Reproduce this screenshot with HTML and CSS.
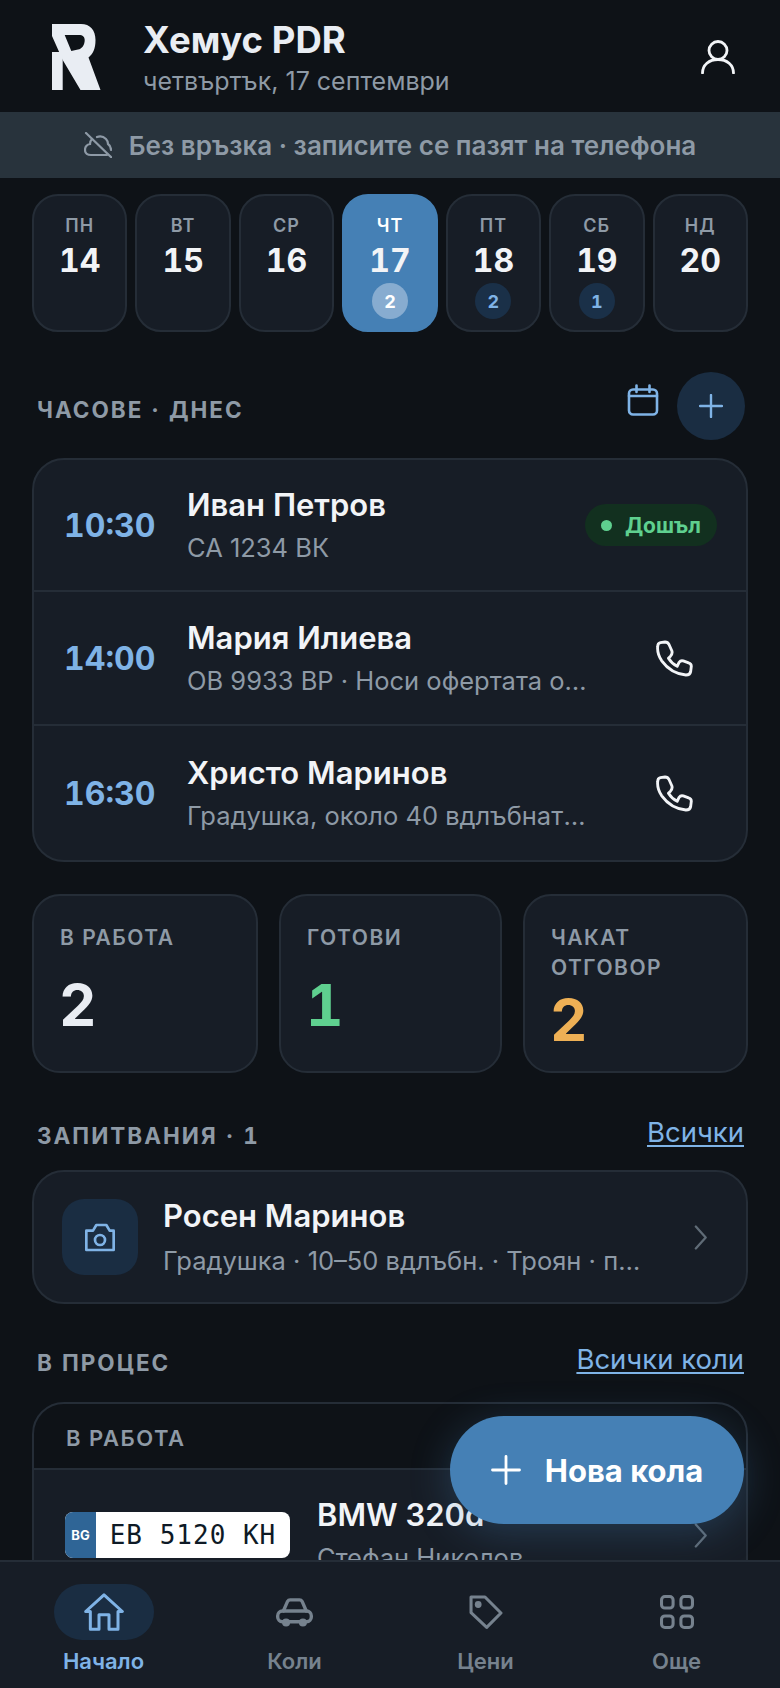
FILE: index.html
```html
<!DOCTYPE html>
<html lang="bg">
<head>
<meta charset="utf-8">
<title>Хемус PDR</title>
<link rel="stylesheet" href="styles.css">
</head>
<body>
<div class="app">
  <div class="scroll">
    <header class="top">
      <svg class="logo" viewBox="0 0 49 66"><path fill="#e9edf3" fill-rule="evenodd" d="M0 0H29C38 0 43.500 6 43.500 16C43.500 25 41 30 36.500 33.500L48.500 66H28.500L10.700 36L0 12ZM12.700 11H26.700C31 11 32.700 13 32.700 16C32.700 21 30 25 26 25.500L19.300 27Z"/><path fill="#e9edf3" d="M0 28H9L10.700 31V66H0Z"/></svg>
      <div class="top-text">
        <div class="brand">Хемус PDR</div>
        <div class="date">четвъртък, 17 септември</div>
      </div>
      <svg class="user" viewBox="0 0 34 34" fill="none" stroke="#f2f4f7" stroke-width="2.800" stroke-linecap="round"><circle cx="17" cy="10.500" r="9"/><path d="M1.500 33C1.500 25 8 19.500 17 19.500S32.500 25 32.500 33"/></svg>
    </header>
    <div class="banner">
      <svg class="off" viewBox="0 0 28 26" fill="none" stroke="#8e9aa6" stroke-width="2.200" stroke-linecap="round"><path d="M2 1L28 26"/><path d="M8 7Q6 9 6 12Q1 13 1 18Q1 23 7 23H23"/><path d="M13 5Q18 3 22 7Q24 9 24 12Q27 14 27 18"/></svg>
      <span>Без връзка · записите се пазят на телефона</span>
    </div>
    <div class="days">
      <div class="day"><span class="dow">ПН</span><span class="num">14</span></div>
      <div class="day"><span class="dow">ВТ</span><span class="num">15</span></div>
      <div class="day"><span class="dow">СР</span><span class="num">16</span></div>
      <div class="day active"><span class="dow">ЧТ</span><span class="num">17</span><span class="cnt">2</span></div>
      <div class="day"><span class="dow">ПТ</span><span class="num">18</span><span class="cnt">2</span></div>
      <div class="day"><span class="dow">СБ</span><span class="num">19</span><span class="cnt">1</span></div>
      <div class="day"><span class="dow">НД</span><span class="num">20</span></div>
    </div>
    <div class="sec sec-hours">
      <span class="sec-title">ЧАСОВЕ · ДНЕС</span>
      <div class="sec-actions">
        <svg class="cal" viewBox="0 0 32 32" fill="none" stroke="#7fb3e6" stroke-width="2.600" stroke-linecap="round" stroke-linejoin="round"><rect x="2" y="5.500" width="28" height="25" rx="4"/><path d="M2 12H30M9.500 1.500V8M22.500 1.500V8"/></svg>
        <button class="round-add"><svg viewBox="0 0 24 24" fill="none" stroke="#7fb3e6" stroke-width="2.400" stroke-linecap="round"><path d="M12 1V23M1 12H23"/></svg></button>
      </div>
    </div>
    <div class="card">
      <div class="appt">
        <span class="time">10:30</span>
        <div class="info"><div class="name">Иван Петров</div><div class="sub">СА 1234 ВК</div></div>
        <span class="chip"><i class="dot"></i>Дошъл</span>
      </div>
      <div class="appt">
        <span class="time">14:00</span>
        <div class="info"><div class="name">Мария Илиева</div><div class="sub">ОВ 9933 ВР · Носи офертата от застрахователя</div></div>
        <svg class="phone" viewBox="15 30 110 110" fill="none" stroke="#f2f4f7" stroke-width="8.500" stroke-linecap="round" stroke-linejoin="round"><path d="M28 38L42 36Q50 36 54 44L62 62Q65 70 58 78L52 84Q62 100 78 108L84 96Q88 90 96 92L112 98Q120 100 120 108L118 124Q116 134 104 134Q60 130 32 92Q18 70 20 50Q20 40 28 38Z"/></svg>
      </div>
      <div class="appt">
        <span class="time">16:30</span>
        <div class="info"><div class="name">Христо Маринов</div><div class="sub">Градушка, около 40 вдлъбнатини по покрива</div></div>
        <svg class="phone" viewBox="15 30 110 110" fill="none" stroke="#f2f4f7" stroke-width="8.500" stroke-linecap="round" stroke-linejoin="round"><path d="M28 38L42 36Q50 36 54 44L62 62Q65 70 58 78L52 84Q62 100 78 108L84 96Q88 90 96 92L112 98Q120 100 120 108L118 124Q116 134 104 134Q60 130 32 92Q18 70 20 50Q20 40 28 38Z"/></svg>
      </div>
    </div>
    <div class="stats">
      <div class="stat"><div class="stat-label">В РАБОТА</div><div class="stat-num">2</div></div>
      <div class="stat"><div class="stat-label">ГОТОВИ</div><div class="stat-num green">1</div></div>
      <div class="stat"><div class="stat-label">ЧАКАТ ОТГОВОР</div><div class="stat-num orange">2</div></div>
    </div>
    <div class="sec sec-inq">
      <span class="sec-title">ЗАПИТВАНИЯ · 1</span>
      <a class="more">Всички</a>
    </div>
    <div class="card inq">
      <div class="inq-ic"><svg viewBox="0 0 90 85" fill="none" stroke="#7fb3e6" stroke-width="8" stroke-linejoin="round"><path d="M4 22H24L34 5H64L74 22H86V80H4Z"/><circle cx="45" cy="50" r="15"/></svg></div>
      <div class="info"><div class="name">Росен Маринов</div><div class="sub">Градушка · 10–50 вдлъбн. · Троян · преди 2 часа</div></div>
      <svg class="chev" viewBox="0 0 12 24" fill="none" stroke="#5f6b76" stroke-width="2.200" stroke-linecap="round" stroke-linejoin="round"><path d="M1.500 1.500L11 12L1.500 22.500"/></svg>
    </div>
    <div class="sec sec-proc">
      <span class="sec-title">В ПРОЦЕС</span>
      <a class="more">Всички коли</a>
    </div>
    <div class="card proc">
      <div class="proc-head">В РАБОТА</div>
      <div class="car">
        <div class="plate"><span class="bg">BG</span><span class="reg">ЕВ 5120 КН</span></div>
        <div class="info"><div class="name">BMW 320d</div><div class="sub">Стефан Николов</div></div>
        <svg class="chev" viewBox="0 0 12 24" fill="none" stroke="#5f6b76" stroke-width="2.200" stroke-linecap="round" stroke-linejoin="round"><path d="M1.500 1.500L11 12L1.500 22.500"/></svg>
      </div>
    </div>
  </div>
  <button class="fab"><svg viewBox="0 0 30 30" fill="none" stroke="#fff" stroke-width="2.800" stroke-linecap="round"><path d="M15 1.500V28.500M1.500 15H28.500"/></svg><span>Нова кола</span></button>
  <nav class="nav">
    <div class="tab on">
      <span class="pill"><svg class="i-home" viewBox="-5 -5 120 113" fill="none" stroke="#7fb3e6" stroke-width="9" stroke-linejoin="round" stroke-linecap="round"><path d="M0 50L55 0L110 50H97V103H70V60H40V103H14V50Z"/></svg></span>
      <span class="tab-label">Начало</span>
    </div>
    <div class="tab">
      <span class="pill"><svg class="i-car" viewBox="0 0 110 85" fill="none" stroke="#76828e" stroke-width="10" stroke-linejoin="round" stroke-linecap="round"><path d="M22 38L34 10Q37 5 42 5H70Q75 5 78 10L90 38"/><rect x="5" y="38" width="100" height="32" rx="14"/><circle cx="30" cy="72" r="12" fill="#76828e" stroke="none"/><circle cx="80" cy="72" r="12" fill="#76828e" stroke="none"/></svg></span>
      <span class="tab-label">Коли</span>
    </div>
    <div class="tab">
      <span class="pill"><svg class="i-tag" viewBox="0 0 100 100" fill="none" stroke="#76828e" stroke-width="9" stroke-linejoin="round"><path d="M6 6H47L94 53L52 95L6 52Z"/><circle cx="27" cy="28" r="10" fill="#76828e" stroke="none"/></svg></span>
      <span class="tab-label">Цени</span>
    </div>
    <div class="tab">
      <span class="pill"><svg class="i-grid" viewBox="0 0 100 100" fill="none" stroke="#76828e" stroke-width="9"><rect x="4.500" y="4.500" width="34" height="34" rx="10"/><rect x="61.500" y="4.500" width="34" height="34" rx="10"/><rect x="4.500" y="61.500" width="34" height="34" rx="10"/><rect x="61.500" y="61.500" width="34" height="34" rx="10"/></svg></span>
      <span class="tab-label">Още</span>
    </div>
  </nav>
</div>
</body>
</html>
```
FILE: styles.css
```css
* { box-sizing: border-box; }
html, body { margin: 0; height: 100%; background: #0e1217; }
body { font-family: "Inter", "Noto Sans", sans-serif; color: #e9edf3; }
.app { position: relative; width: 780px; height: 1688px; overflow: hidden; background: #0e1217; }
.scroll { height: 1688px; overflow: hidden; }
.top { display: flex; align-items: center; height: 112px; padding: 0 45px 0 52px; }
.logo { width: 49px; height: 66px; flex: none; margin-top: 1px; }
.top-text { margin-left: 42px; flex: 1; }
.brand { font-size: 36.500px; font-weight: 700; line-height: 44px; margin-top: 2px; }
.date { font-size: 25px; color: #8e9aa6; line-height: 32px; margin-top: 3px; }
.user { width: 34px; height: 34px; margin-top: 2px; }
.banner { display: flex; align-items: center; justify-content: center; gap: 17px; height: 66px; background: #28333c; color: #8e9aa6; font-size: 26px; font-weight: 600; }
.off { width: 28px; height: 26px; }
.days { display: flex; gap: 8px; padding: 16px 32px 0 32px; }
.day { flex: 1 1 auto; height: 138px; background: #171d26; border: 2px solid #252d37; border-radius: 26px; display: flex; flex-direction: column; align-items: center; padding-top: 18px; }
.day.active { background: #4580b5; border-color: #4580b5; }
.dow { font-size: 18px; font-weight: 600; color: #8e9aa6; letter-spacing: 1px; line-height: 24px; }
.active .dow { color: #fff; }
.num { font-size: 32px; font-weight: 700; color: #f2f4f7; line-height: 38px; margin-top: 4px; font-variant-numeric: tabular-nums; }
.cnt { width: 36px; height: 36px; border-radius: 50%; background: #1a3048; color: #7fb3e6; font-size: 18px; font-weight: 700; display: flex; align-items: center; justify-content: center; margin-top: 3px; font-variant-numeric: tabular-nums; }
.active .cnt { background: #87acd0; color: #fff; }
.sec { display: flex; align-items: center; justify-content: space-between; padding: 0 36px 0 37px; }
.sec-hours { margin-top: 40px; height: 68px; padding-right: 35px; }
.sec-title { font-size: 22.500px; font-weight: 700; letter-spacing: 2px; color: #8e9aa6; position: relative; top: 3px; font-variant-numeric: tabular-nums; }
.sec-actions { display: flex; align-items: center; gap: 18px; }
.cal { width: 32px; height: 32px; margin-top: -12px; }
.round-add { width: 68px; height: 68px; border-radius: 50%; background: #1a2d42; border: 0; padding: 22px; display: flex; }
.round-add svg { width: 24px; height: 24px; }
.card { margin: 18px 32px 0 32px; background: #171d26; border: 2px solid #252d37; border-radius: 32px; overflow: hidden; }
.appt { display: flex; align-items: center; height: 134px; padding: 0 29px 0 30px; border-bottom: 2px solid #252d37; }
.appt:first-child { height: 132px; }
.appt:last-child { border-bottom: 0; }
.time { flex: 0 0 123px; font-size: 32px; font-weight: 700; color: #7fb3e6; font-variant-numeric: tabular-nums; }
.info { flex: 1; min-width: 0; }
.name { font-size: 31px; font-weight: 600; line-height: 40px; color: #f2f4f7; }
.sub { font-size: 25.500px; line-height: 34px; color: #8e9aa6; margin-top: 6px; white-space: nowrap; overflow: hidden; text-overflow: ellipsis; padding-right: 58px; }
.chip { display: flex; align-items: center; gap: 13px; height: 42px; padding: 0 16px; border-radius: 21px; background: #12301f; color: #5fd08f; font-size: 21px; font-weight: 700; }
.dot { width: 11px; height: 11px; border-radius: 50%; background: #5fd08f; }
.phone { width: 37px; height: 37px; margin-right: 24px; flex: none; }
.stats { display: grid; grid-template-columns: 226px 223px 225px; gap: 21px; margin: 32px 32px 0 32px; }
.stat { height: 179px; background: #171d26; border: 2px solid #252d37; border-radius: 28px; padding: 27px 26px; }
.stat-label { font-size: 21px; font-weight: 600; letter-spacing: 1.500px; color: #8e9aa6; line-height: 30px; }
.stat-num { font-size: 58px; font-weight: 700; line-height: 56px; margin: 24px 0 0 -1px; color: #e9edf3; font-variant-numeric: tabular-nums; }
.stat-num.green { color: #5fd08f; }
.stat-num.orange { color: #eeb055; margin-top: 9px; }
.sec-inq { margin-top: 39px; height: 40px; }
.more { font-size: 27.500px; color: #7fb3e6; text-decoration: underline; text-underline-offset: 3px; }
.inq { display: flex; align-items: center; height: 134px; padding: 0 39px 0 28px; margin-top: 18px; }
.inq-ic { width: 76px; height: 76px; border-radius: 22px; background: #1a2d42; display: flex; align-items: center; justify-content: center; margin-right: 25px; flex: none; }
.inq-ic svg { width: 30px; height: 29px; }
.inq .sub { padding-right: 42px; margin-top: 8px; }
.chev { width: 13px; height: 25px; flex: none; }
.sec-proc { margin-top: 35px; height: 40px; }
.proc { margin-top: 23px; background: #0e1217; height: 240px; }
.proc-head { height: 66px; padding: 4px 32px 0; display: flex; align-items: center; font-size: 22px; font-weight: 600; letter-spacing: 1.500px; color: #8e9aa6; border-bottom: 2px solid #252d37; }
.car { display: flex; align-items: center; padding: 0 39px 0 31px; height: 130px; background: #171d26; }
.plate { display: flex; width: 225px; height: 46px; border-radius: 8px; overflow: hidden; background: #fff; flex: none; margin-right: 27px; }
.bg { flex: 0 0 31px; background: #2f6596; color: #fff; font-size: 13px; font-weight: 700; display: flex; align-items: center; justify-content: center; }
.reg { flex: 1; color: #0e1a26; font-family: "DejaVu Sans Mono", monospace; font-size: 26px; letter-spacing: 1px; display: flex; align-items: center; justify-content: center; white-space: pre; }
.fab { position: absolute; left: 450px; top: 1416px; width: 294px; height: 108px; border: 0; border-radius: 54px; background: #4580b5; color: #fff; display: flex; align-items: center; justify-content: center; gap: 24px; box-shadow: 0 8px 40px rgba(69,128,181,.3); font-family: inherit; font-size: 31px; font-weight: 700; }
.fab svg { width: 30px; height: 30px; }
.nav { position: absolute; left: 0; right: 0; bottom: 0; height: 128px; background: #171d26; border-top: 2px solid #252d37; display: grid; grid-template-columns: repeat(4, 1fr); padding: 22px 8px 0; }
.tab { display: flex; flex-direction: column; align-items: center; }
.pill { width: 100px; height: 56px; border-radius: 28px; display: flex; align-items: center; justify-content: center; }
.tab.on .pill { background: #1a2d42; }
.i-home { width: 40px; height: 38px; }
.i-car { width: 37px; height: 29px; }
.i-tag { width: 34px; height: 34px; }
.i-grid { width: 34px; height: 34px; }
.tab-label { font-size: 22px; font-weight: 600; color: #76828e; margin-top: 8px; }
.tab.on .tab-label { color: #7fb3e6; }
```
